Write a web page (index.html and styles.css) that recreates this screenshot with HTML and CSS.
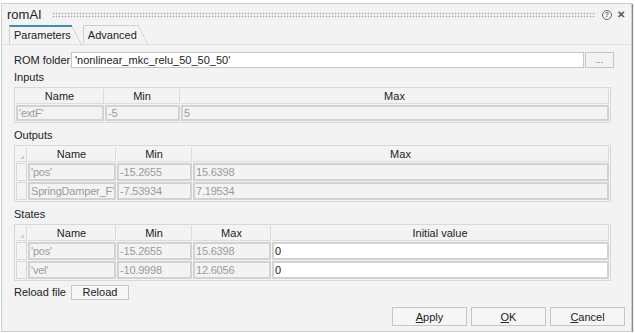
FILE: index.html
```html
<!DOCTYPE html>
<html lang="en">
<head>
  <meta charset="UTF-8" />
  <title>romAI</title>
  <link rel="stylesheet" href="styles.css">
</head>
<body>
  <div class="window">

    <!-- Barre de titre -->
    <div class="titlebar">
      <span class="title">romAI</span>
      <div class="grip"></div>
      <span class="help-icon">?</span>
      <span class="close-icon">&#x2715;</span>
    </div>

    <!-- Onglets -->
    <div class="tabs">
      <div class="tab active">Parameters</div>
      <div class="tab">Advanced</div>
    </div>

    <div class="panel">
      <div class="rom-row">
        <span class="field-label">ROM folder</span>
        <div class="text-input">'nonlinear_mkc_relu_50_50_50'</div>
        <button class="browse-btn">...</button>
      </div>

      <div class="section-label first">Inputs</div>
      <table class="grid inputs">
        <colgroup><col class="c-name-in"><col class="c-min"><col></colgroup>
        <tr><th>Name</th><th>Min</th><th>Max</th></tr>
        <tr><td>'extF'</td><td>-5</td><td>5</td></tr>
      </table>

      <div class="section-label">Outputs</div>
      <table class="grid">
        <colgroup><col class="c-corner"><col class="c-name"><col class="c-min"><col></colgroup>
        <tr><th class="corner"><span class="corner-mark"></span></th><th>Name</th><th>Min</th><th>Max</th></tr>
        <tr><td class="rowhead"></td><td>'pos'</td><td>-15.2655</td><td>15.6398</td></tr>
        <tr><td class="rowhead"></td><td>SpringDamper_F'</td><td>-7.53934</td><td>7.19534</td></tr>
      </table>

      <div class="section-label">States</div>
      <table class="grid">
        <colgroup><col class="c-corner"><col class="c-name"><col class="c-min"><col class="c-max"><col></colgroup>
        <tr><th class="corner"><span class="corner-mark"></span></th><th>Name</th><th>Min</th><th>Max</th><th>Initial value</th></tr>
        <tr><td class="rowhead"></td><td>'pos'</td><td>-15.2655</td><td>15.6398</td><td class="edit">0</td></tr>
        <tr><td class="rowhead"></td><td>'vel'</td><td>-10.9998</td><td>12.6056</td><td class="edit">0</td></tr>
      </table>

      <div class="reload-row">
        <span class="field-label">Reload file</span>
        <button class="btn reload">Reload</button>
      </div>

      <div class="actions">
        <button class="btn action"><u>A</u>pply</button>
        <button class="btn action"><u>O</u>K</button>
        <button class="btn action"><u>C</u>ancel</button>
      </div>
    </div>
  </div>
</body>
</html>
```

FILE: styles.css
```css
/* Base */
html, body {
  margin: 0;
  padding: 0;
  background: #ffffff;
  font-family: 'Liberation Sans', Arial, sans-serif;
  font-size: 11px;
  color: #222;
}

/* Fenêtre */
.window {
  margin: 3px 0 0 1px;
  width: 631px;
  height: 329px;
  border: 1px solid #cfcfcf;
  background: #f3f3f3;
  box-shadow: 1px 1px 1px #8a8a8a;
  box-sizing: border-box;
  display: flex;
  flex-direction: column;
}

/* Barre de titre */
.titlebar {
  height: 21px;
  display: flex;
  align-items: center;
  padding: 0 6px 0 5px;
}
.title {
  font-size: 13px;
  color: #222;
  margin-right: 10px;
}
.grip {
  flex: 1;
  height: 6px;
  margin-right: 6px;
  background-image: radial-gradient(circle, #a9a9a9 0.7px, transparent 1.1px);
  background-size: 3px 3px;
}
.help-icon {
  width: 8px;
  height: 8px;
  border: 1.3px solid #666;
  border-radius: 50%;
  font-size: 7px;
  line-height: 8px;
  text-align: center;
  font-weight: bold;
  color: #666;
  margin-right: 5px;
}
.close-icon {
  font-size: 10px;
  color: #555;
  font-weight: bold;
}

/* Onglets */
.tabs {
  display: flex;
  height: 19px;
  padding-left: 7px;
  border-bottom: 1px solid #e2e2e2;
}
.tab {
  position: relative;
  padding: 3px 1px 0 4px;
  margin-right: 11px;
  border-left: 1px solid #cfcfcf;
  border-top: 1px solid #cfcfcf;
  color: #222;
}
.tab::after {
  content: "";
  position: absolute;
  top: -1px;
  right: -10px;
  width: 10px;
  height: 20px;
  background: linear-gradient(to top right, transparent calc(50% - 0.6px), #c4c4c4 50%, transparent calc(50% + 0.6px));
}
.tab.active {
  border-top: 2px solid #3f8fa6;
  padding-top: 2px;
}

/* Contenu */
.panel {
  flex: 1;
  padding: 7px 6px 0 12px;
  display: flex;
  flex-direction: column;
}
.rom-row, .reload-row {
  display: flex;
  align-items: center;
  height: 16px;
}
.field-label {
  flex: none;
  width: 57px;
  color: #222;
}
.text-input {
  flex: 1;
  height: 14px;
  line-height: 14px;
  background: #fff;
  border: 1px solid #c6c6c6;
  padding-left: 3px;
  color: #222;
}
.browse-btn {
  width: 29px;
  height: 16px;
  margin: 0 11px 0 1px;
  padding: 0;
  border: 1px solid #c6c6c6;
  background: #f3f3f3;
  color: #666;
  font-size: 9px;
  line-height: 10px;
}

.section-label {
  height: 14px;
  line-height: 14px;
  margin: 5px 0 3px 0;
}
.section-label.first {
  margin-top: 2px;
}

/* Tableaux */
.grid {
  width: 597px;
  border-collapse: separate;
  border-spacing: 1px;
  border: 1px solid #d8d8d8;
  table-layout: fixed;
}
.grid col.c-corner { width: 11px; }
.grid col.c-name-in { width: 88px; }
.grid col.c-name { width: 88px; }
.grid col.c-min { width: 75px; }
.grid col.c-max { width: 78px; }
.grid th {
  height: 14px;
  font-weight: normal;
  color: #222;
  border: 1px solid #dcdcdc;
  border-width: 0 1px 1px 0;
  padding: 0;
  text-align: center;
}
.grid td {
  height: 14px;
  padding: 0 1px;
  border: 2px solid #d2d2d2;
  color: #9b9b9b;
  letter-spacing: -0.2px;
  white-space: nowrap;
  overflow: hidden;
}
.grid.inputs td {
  height: 12px;
}
.grid td.rowhead {
  padding: 0;
  border: 1px solid #d8d8d8;
}
.grid td.edit {
  background: #fff;
  color: #222;
}
.grid th.corner {
  position: relative;
}
.corner-mark {
  position: absolute;
  right: 2px;
  bottom: 2px;
  width: 0;
  height: 0;
  border-left: 4px solid transparent;
  border-bottom: 4px solid #d0d0d0;
}

/* Boutons */
.reload-row {
  margin-top: 3px;
}
.btn {
  height: 16px;
  padding: 0;
  border: 1px solid #c6c6c6;
  background: #f6f6f6;
  font-family: inherit;
  font-size: 11px;
  color: #222;
}
.reload {
  width: 58px;
  height: 15px;
}
.actions {
  display: flex;
  justify-content: flex-end;
  gap: 4px;
  margin-top: 7px;
}
.btn.action {
  width: 75px;
  height: 19px;
}
```
